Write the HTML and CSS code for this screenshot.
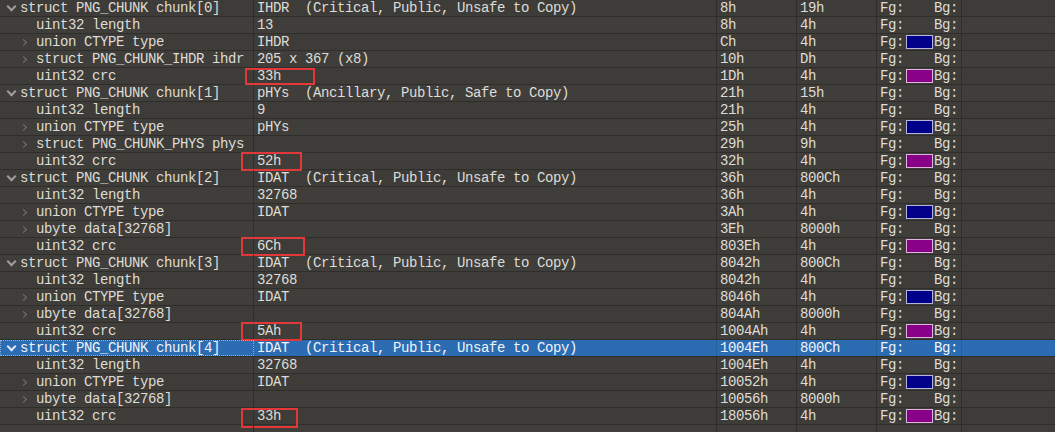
FILE: index.html
```html
<!DOCTYPE html>
<html>
<head>
<meta charset="utf-8">
<link rel="stylesheet" href="styles.css">
</head>
<body>
<div class="grid">
  <!-- chunk 0 -->
  <div class="row"><div class="c name lvl0"><span class="chev open"></span>struct PNG_CHUNK chunk[0]</div><div class="c val">IHDR  (Critical, Public, Unsafe to Copy)</div><div class="c">8h</div><div class="c">19h</div><div class="c col"><span>Fg:</span><span class="sw"></span><span>Bg:</span></div><div class="c last"></div></div>
  <div class="row"><div class="c name lvl1"><span class="chev none"></span>uint32 length</div><div class="c val">13</div><div class="c">8h</div><div class="c">4h</div><div class="c col"><span>Fg:</span><span class="sw"></span><span>Bg:</span></div><div class="c last"></div></div>
  <div class="row"><div class="c name lvl1"><span class="chev shut"></span>union CTYPE type</div><div class="c val">IHDR</div><div class="c">Ch</div><div class="c">4h</div><div class="c col"><span>Fg:</span><span class="sw blue"></span><span>Bg:</span></div><div class="c last"></div></div>
  <div class="row"><div class="c name lvl1"><span class="chev shut"></span>struct PNG_CHUNK_IHDR ihdr</div><div class="c val">205 x 367 (x8)</div><div class="c">10h</div><div class="c">Dh</div><div class="c col"><span>Fg:</span><span class="sw"></span><span>Bg:</span></div><div class="c last"></div></div>
  <div class="row"><div class="c name lvl1"><span class="chev none"></span>uint32 crc</div><div class="c val">33h<span class="mark mark-1"></span></div><div class="c">1Dh</div><div class="c">4h</div><div class="c col"><span>Fg:</span><span class="sw purple"></span><span>Bg:</span></div><div class="c last"></div></div>
  <!-- chunk 1 -->
  <div class="row"><div class="c name lvl0"><span class="chev open"></span>struct PNG_CHUNK chunk[1]</div><div class="c val">pHYs  (Ancillary, Public, Safe to Copy)</div><div class="c">21h</div><div class="c">15h</div><div class="c col"><span>Fg:</span><span class="sw"></span><span>Bg:</span></div><div class="c last"></div></div>
  <div class="row"><div class="c name lvl1"><span class="chev none"></span>uint32 length</div><div class="c val">9</div><div class="c">21h</div><div class="c">4h</div><div class="c col"><span>Fg:</span><span class="sw"></span><span>Bg:</span></div><div class="c last"></div></div>
  <div class="row"><div class="c name lvl1"><span class="chev shut"></span>union CTYPE type</div><div class="c val">pHYs</div><div class="c">25h</div><div class="c">4h</div><div class="c col"><span>Fg:</span><span class="sw blue"></span><span>Bg:</span></div><div class="c last"></div></div>
  <div class="row"><div class="c name lvl1"><span class="chev shut"></span>struct PNG_CHUNK_PHYS phys</div><div class="c val"></div><div class="c">29h</div><div class="c">9h</div><div class="c col"><span>Fg:</span><span class="sw"></span><span>Bg:</span></div><div class="c last"></div></div>
  <div class="row"><div class="c name lvl1"><span class="chev none"></span>uint32 crc</div><div class="c val">52h<span class="mark mark-2"></span></div><div class="c">32h</div><div class="c">4h</div><div class="c col"><span>Fg:</span><span class="sw purple"></span><span>Bg:</span></div><div class="c last"></div></div>
  <!-- chunk 2 -->
  <div class="row"><div class="c name lvl0"><span class="chev open"></span>struct PNG_CHUNK chunk[2]</div><div class="c val">IDAT  (Critical, Public, Unsafe to Copy)</div><div class="c">36h</div><div class="c">800Ch</div><div class="c col"><span>Fg:</span><span class="sw"></span><span>Bg:</span></div><div class="c last"></div></div>
  <div class="row"><div class="c name lvl1"><span class="chev none"></span>uint32 length</div><div class="c val">32768</div><div class="c">36h</div><div class="c">4h</div><div class="c col"><span>Fg:</span><span class="sw"></span><span>Bg:</span></div><div class="c last"></div></div>
  <div class="row"><div class="c name lvl1"><span class="chev shut"></span>union CTYPE type</div><div class="c val">IDAT</div><div class="c">3Ah</div><div class="c">4h</div><div class="c col"><span>Fg:</span><span class="sw blue"></span><span>Bg:</span></div><div class="c last"></div></div>
  <div class="row"><div class="c name lvl1"><span class="chev shut"></span>ubyte data[32768]</div><div class="c val"></div><div class="c">3Eh</div><div class="c">8000h</div><div class="c col"><span>Fg:</span><span class="sw"></span><span>Bg:</span></div><div class="c last"></div></div>
  <div class="row"><div class="c name lvl1"><span class="chev none"></span>uint32 crc</div><div class="c val">6Ch<span class="mark mark-3"></span></div><div class="c">803Eh</div><div class="c">4h</div><div class="c col"><span>Fg:</span><span class="sw purple"></span><span>Bg:</span></div><div class="c last"></div></div>
  <!-- chunk 3 -->
  <div class="row"><div class="c name lvl0"><span class="chev open"></span>struct PNG_CHUNK chunk[3]</div><div class="c val">IDAT  (Critical, Public, Unsafe to Copy)</div><div class="c">8042h</div><div class="c">800Ch</div><div class="c col"><span>Fg:</span><span class="sw"></span><span>Bg:</span></div><div class="c last"></div></div>
  <div class="row"><div class="c name lvl1"><span class="chev none"></span>uint32 length</div><div class="c val">32768</div><div class="c">8042h</div><div class="c">4h</div><div class="c col"><span>Fg:</span><span class="sw"></span><span>Bg:</span></div><div class="c last"></div></div>
  <div class="row"><div class="c name lvl1"><span class="chev shut"></span>union CTYPE type</div><div class="c val">IDAT</div><div class="c">8046h</div><div class="c">4h</div><div class="c col"><span>Fg:</span><span class="sw blue"></span><span>Bg:</span></div><div class="c last"></div></div>
  <div class="row"><div class="c name lvl1"><span class="chev shut"></span>ubyte data[32768]</div><div class="c val"></div><div class="c">804Ah</div><div class="c">8000h</div><div class="c col"><span>Fg:</span><span class="sw"></span><span>Bg:</span></div><div class="c last"></div></div>
  <div class="row"><div class="c name lvl1"><span class="chev none"></span>uint32 crc</div><div class="c val">5Ah<span class="mark mark-4"></span></div><div class="c">1004Ah</div><div class="c">4h</div><div class="c col"><span>Fg:</span><span class="sw purple"></span><span>Bg:</span></div><div class="c last"></div></div>
  <!-- chunk 4 -->
  <div class="row sel"><div class="c name lvl0 focus"><span class="chev open"></span>struct PNG_CHUNK chunk[4]</div><div class="c val">IDAT  (Critical, Public, Unsafe to Copy)</div><div class="c">1004Eh</div><div class="c">800Ch</div><div class="c col"><span>Fg:</span><span class="sw"></span><span>Bg:</span></div><div class="c last"></div></div>
  <div class="row"><div class="c name lvl1"><span class="chev none"></span>uint32 length</div><div class="c val">32768</div><div class="c">1004Eh</div><div class="c">4h</div><div class="c col"><span>Fg:</span><span class="sw"></span><span>Bg:</span></div><div class="c last"></div></div>
  <div class="row"><div class="c name lvl1"><span class="chev shut"></span>union CTYPE type</div><div class="c val">IDAT</div><div class="c">10052h</div><div class="c">4h</div><div class="c col"><span>Fg:</span><span class="sw blue"></span><span>Bg:</span></div><div class="c last"></div></div>
  <div class="row"><div class="c name lvl1"><span class="chev shut"></span>ubyte data[32768]</div><div class="c val"></div><div class="c">10056h</div><div class="c">8000h</div><div class="c col"><span>Fg:</span><span class="sw"></span><span>Bg:</span></div><div class="c last"></div></div>
  <div class="row"><div class="c name lvl1"><span class="chev none"></span>uint32 crc</div><div class="c val">33h<span class="mark mark-5"></span></div><div class="c">18056h</div><div class="c">4h</div><div class="c col"><span>Fg:</span><span class="sw purple"></span><span>Bg:</span></div><div class="c last"></div></div>
  <div class="row"><div class="c name lvl0"></div><div class="c val"></div><div class="c"></div><div class="c"></div><div class="c col"></div><div class="c last"></div></div>
</div>
</body>
</html>
```

FILE: styles.css
```css
html, body {
  margin: 0;
  padding: 0;
  background: #3d3b37;
  overflow: hidden;
}
body {
  width: 1055px;
  height: 432px;
  font-family: "Liberation Mono", "DejaVu Sans Mono", monospace;
  font-size: 14px;
  letter-spacing: -0.4px;
  color: #dedcd6;
}
.grid {
  display: flex;
  flex-direction: column;
}
.row {
  display: grid;
  grid-template-columns: 254px 463px 80px 80px 85px 1fr;
  height: 17px;
  background: #3e3c38;
  box-shadow: inset 0 -1px 0 #2f2e2b;
}
.row:nth-child(even) {
  background: #403e3a;
}
.c {
  position: relative;
  padding-left: 3px;
  height: 16px;
  line-height: 16px;
  white-space: pre;
  overflow: visible;
  border-right: 1px solid #2f2e2b;
  box-sizing: border-box;
}
.c.last { border-right: none; }
.name {
  display: flex;
  align-items: center;
  overflow: hidden;
}
.name.lvl0 { padding-left: 7px; }
.name.lvl1 { padding-left: 24px; }
.chev {
  display: inline-block;
  flex: none;
}
.lvl0 .chev { width: 13px; }
.lvl1 .chev { width: 12px; }
.chev.open::before {
  content: "";
  display: block;
  width: 7px;
  height: 7px;
  border-right: 2px solid #a09e9a;
  border-bottom: 2px solid #a09e9a;
  transform: translate(1px, -2px) rotate(45deg);
  box-sizing: border-box;
}
.chev.shut::before {
  content: "";
  display: block;
  width: 5px;
  height: 5px;
  border-right: 1px solid #757370;
  border-bottom: 1px solid #757370;
  transform: translate(-3px, 0) rotate(-45deg);
  box-sizing: border-box;
}
.col {
  display: flex;
  align-items: center;
}
.sw {
  display: inline-block;
  width: 27px;
  height: 14px;
  margin: 0 1px 0 2px;
  box-sizing: border-box;
}
.sw.blue {
  background: #000088;
  border: 1px solid #b4b4dc;
}
.sw.purple {
  background: #880088;
  border: 1px solid #dcb4dc;
}
.row.sel {
  background: #2b6cb3;
  color: #f2f4f8;
}
.row.sel .c { border-right-color: #25609f; }
.row.sel .chev.open::before {
  border-color: #dfe8f4;
}
.focus {
  outline: 1px dotted #8fb3dc;
  outline-offset: -1px;
}
.mark {
  position: absolute;
  top: -1px;
  height: 19px;
  border: 2px solid #e2383a;
  box-sizing: border-box;
  left: -13px;
}
.mark-1 { left: -9px; width: 70px; top: 0; height: 17px; }
.mark-2 { width: 61px; }
.mark-3 { width: 64px; }
.mark-4 { width: 61px; }
.mark-5 { width: 57px; top: 0; height: 20px; }
```
